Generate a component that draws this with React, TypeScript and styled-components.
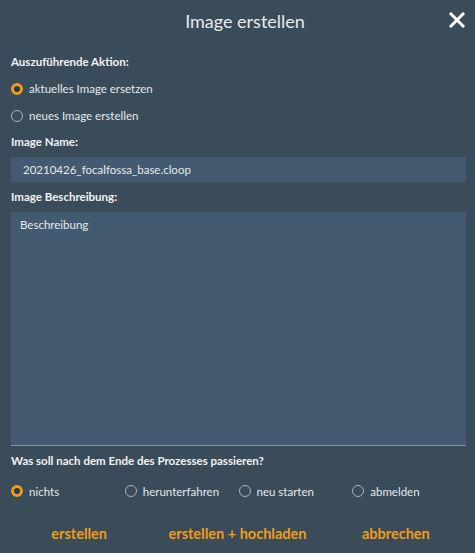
import React, { useState } from 'react';
import styled, { createGlobalStyle } from 'styled-components';

const GlobalStyle = createGlobalStyle`
  html, body {
    margin: 0;
    padding: 0;
    background: #3a4b59;
  }
  * { box-sizing: border-box; }
`;

const Dialog = styled.div`
  width: 475px;
  height: 553px;
  background: #3a4b59;
  font-family: Lato, "Open Sans", sans-serif;
  color: #e4e9ed;
  display: flex;
  flex-direction: column;
`;

const Header = styled.div`
  position: relative;
  height: 42px;
  padding-left: 15px;
  display: flex;
  align-items: center;
  justify-content: center;
`;

const Title = styled.h1`
  margin: 0;
  font-size: 18px;
  font-weight: 400;
  color: #e6eaee;
`;

const CloseButton = styled.button`
  position: absolute;
  right: 9px;
  top: 11px;
  width: 18px;
  height: 18px;
  padding: 0;
  border: none;
  background: none;
  cursor: pointer;
  display: flex;
  align-items: center;
  justify-content: center;
`;

const Body = styled.div`
  padding: 0 9px 0 11px;
  display: flex;
  flex-direction: column;
`;

const Label = styled.div<{ $top: number }>`
  margin-top: ${p => p.$top}px;
  font-size: 11.5px;
  font-weight: 700;
  line-height: 16px;
  color: #f0f3f5;
`;

const RadioGroup = styled.div<{ $top: number }>`
  margin-top: ${p => p.$top}px;
  display: flex;
  flex-direction: column;
`;

const RadioRow = styled.label<{ $height?: number }>`
  display: flex;
  align-items: center;
  gap: 6px;
  height: ${p => p.$height ?? 27}px;
  font-size: 11.5px;
  color: #e4e9ed;
  cursor: pointer;
`;

const Circle = styled.span<{ $on: boolean }>`
  width: 12px;
  height: 12px;
  border-radius: 50%;
  flex-shrink: 0;
  border: ${p => (p.$on ? '3.5px solid #f29c0f' : '1.5px solid #aab3bb')};
  background: ${p => (p.$on ? '#2b3a45' : 'transparent')};
`;

const TextInput = styled.input`
  margin-top: 7px;
  height: 25px;
  width: 100%;
  border: none;
  outline: none;
  background: #435a70;
  color: #e4e9ed;
  font-family: inherit;
  font-size: 11.5px;
  padding: 0 12px;
`;

const TextArea = styled.textarea`
  margin-top: 7px;
  height: 234px;
  width: 100%;
  resize: none;
  border: none;
  border-bottom: 1px solid #7c95ad;
  outline: none;
  background: #435a70;
  color: #e4e9ed;
  font-family: inherit;
  font-size: 11.5px;
  padding: 6px 9px;
  &::placeholder { color: #e4e9ed; }
`;

const OptionGrid = styled.div`
  margin-top: 9px;
  display: grid;
  grid-template-columns: repeat(4, 1fr);
`;

const Footer = styled.div`
  margin-top: 14px;
  display: grid;
  grid-template-columns: repeat(3, 1fr);
  height: 30px;
`;

const ActionButton = styled.button`
  border: none;
  background: none;
  color: #f29c0f;
  font-family: inherit;
  font-size: 14.5px;
  font-weight: 700;
  cursor: pointer;
  padding: 0;
`;

const Radio = ({ on, label, onClick, height }: { on: boolean; label: string; onClick: () => void; height?: number }) => (
  <RadioRow $height={height} onClick={onClick}>
    <Circle $on={on} />
    {label}
  </RadioRow>
);

export default function App() {
  const [action, setAction] = useState('replace');
  const [after, setAfter] = useState('nichts');

  return (
    <>
      <GlobalStyle />
      <Dialog>
        <Header>
          <Title>Image erstellen</Title>
          <CloseButton aria-label="schließen">
            <svg width="16" height="16" viewBox="0 0 16 16">
              <path d="M2 2 L14 14 M14 2 L2 14" stroke="#ffffff" strokeWidth="3" strokeLinecap="square" />
            </svg>
          </CloseButton>
        </Header>
        <Body>
          <Label $top={12}>Auszuführende Aktion:</Label>
          <RadioGroup $top={5}>
            <Radio on={action === 'replace'} label="aktuelles Image ersetzen" onClick={() => setAction('replace')} />
            <Radio on={action === 'new'} label="neues Image erstellen" onClick={() => setAction('new')} />
          </RadioGroup>
          <Label $top={5}>Image Name:</Label>
          <TextInput defaultValue="20210426_focalfossa_base.cloop" />
          <Label $top={7}>Image Beschreibung:</Label>
          <TextArea placeholder="Beschreibung" />
          <Label $top={7}>Was soll nach dem Ende des Prozesses passieren?</Label>
          <OptionGrid>
            {['nichts', 'herunterfahren', 'neu starten', 'abmelden'].map(o => (
              <Radio key={o} height={26} on={after === o} label={o} onClick={() => setAfter(o)} />
            ))}
          </OptionGrid>
        </Body>
        <Footer>
          <ActionButton>erstellen</ActionButton>
          <ActionButton>erstellen + hochladen</ActionButton>
          <ActionButton>abbrechen</ActionButton>
        </Footer>
      </Dialog>
    </>
  );
}
